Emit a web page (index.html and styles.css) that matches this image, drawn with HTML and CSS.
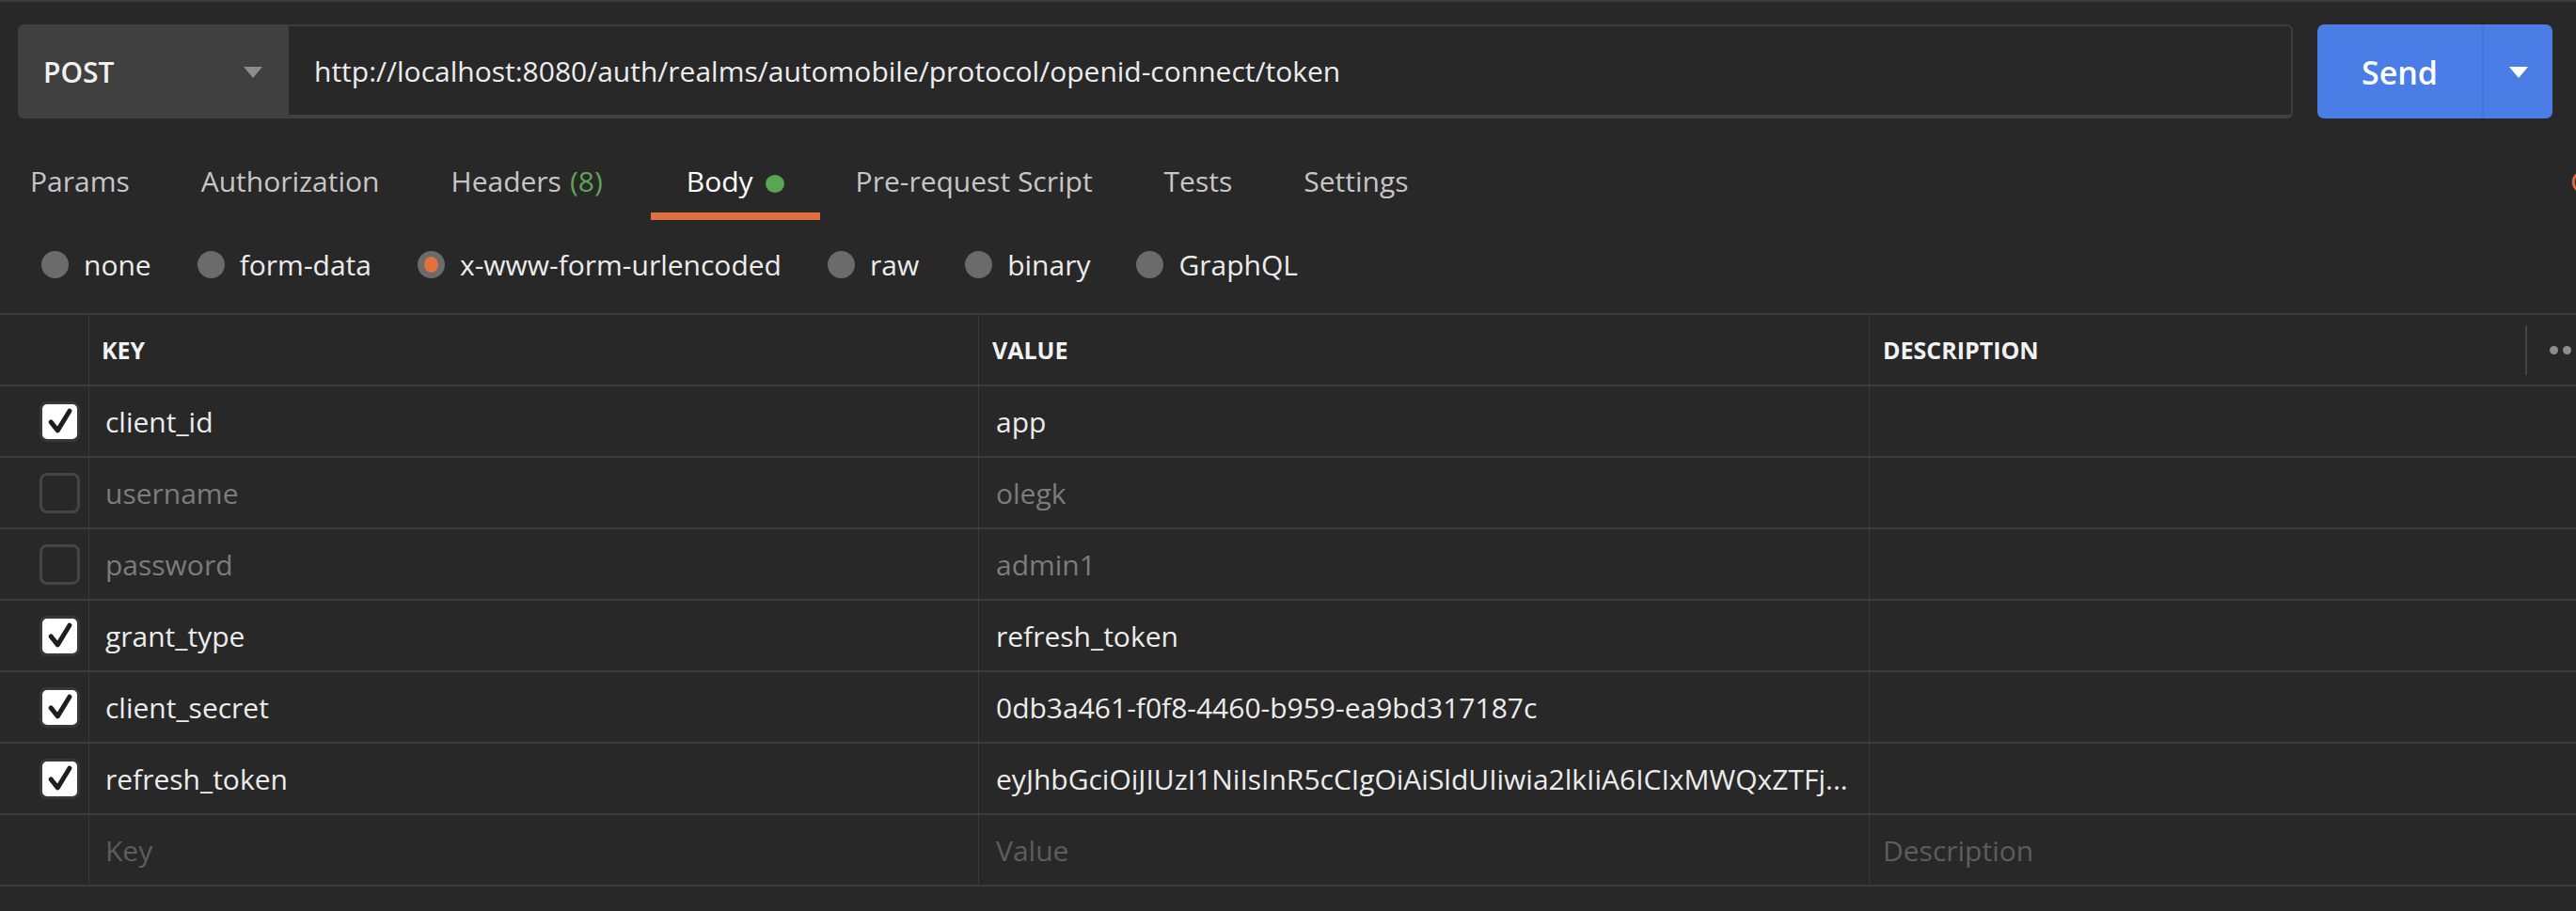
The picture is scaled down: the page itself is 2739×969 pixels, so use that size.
FILE: index.html
```html
<!DOCTYPE html>
<html lang="en">
<head>
<meta charset="utf-8">
<title>Postman request</title>
<link rel="stylesheet" href="styles.css">
</head>
<body>
<div class="app">
  <div class="request-bar">
    <div class="method">
      <span class="method-name">POST</span>
      <span class="caret"></span>
    </div>
    <div class="url">http://localhost:8080/auth/realms/automobile/protocol/openid-connect/token</div>
    <div class="send">
      <span class="send-label">Send</span>
      <span class="send-drop"><span class="caret white"></span></span>
    </div>
  </div>

  <div class="tabs-row">
    <div class="tabs">
      <div class="tab">Params</div>
      <div class="tab">Authorization</div>
      <div class="tab headers">Headers <span class="count">(8)</span></div>
      <div class="tab active">Body <span class="dot"></span></div>
      <div class="tab">Pre-request Script</div>
      <div class="tab">Tests</div>
      <div class="tab">Settings</div>
    </div>
    <div class="spacer"></div>
    <div class="side-links"><span class="cookies">Cookies</span></div>
  </div>

  <div class="body-types">
    <label class="radio"><span class="circle"></span>none</label>
    <label class="radio"><span class="circle"></span>form-data</label>
    <label class="radio selected"><span class="circle"><span class="inner"></span></span>x-www-form-urlencoded</label>
    <label class="radio"><span class="circle"></span>raw</label>
    <label class="radio"><span class="circle"></span>binary</label>
    <label class="radio"><span class="circle"></span>GraphQL</label>
  </div>

  <div class="table">
    <div class="row head">
      <div class="cell check"></div>
      <div class="cell key">KEY</div>
      <div class="cell value">VALUE</div>
      <div class="cell desc">DESCRIPTION<span class="head-tools"><span class="vbar"></span><span class="dots"><i></i><i></i><i></i></span></span></div>
    </div>
    <div class="row">
      <div class="cell check"><span class="box on"><svg viewBox="0 0 40 40"><path d="M9 21 L17 31 L31 8"/></svg></span></div>
      <div class="cell key">client_id</div>
      <div class="cell value">app</div>
      <div class="cell desc"></div>
    </div>
    <div class="row off">
      <div class="cell check"><span class="box"></span></div>
      <div class="cell key">username</div>
      <div class="cell value">olegk</div>
      <div class="cell desc"></div>
    </div>
    <div class="row off">
      <div class="cell check"><span class="box"></span></div>
      <div class="cell key">password</div>
      <div class="cell value">admin1</div>
      <div class="cell desc"></div>
    </div>
    <div class="row">
      <div class="cell check"><span class="box on"><svg viewBox="0 0 40 40"><path d="M9 21 L17 31 L31 8"/></svg></span></div>
      <div class="cell key">grant_type</div>
      <div class="cell value">refresh_token</div>
      <div class="cell desc"></div>
    </div>
    <div class="row">
      <div class="cell check"><span class="box on"><svg viewBox="0 0 40 40"><path d="M9 21 L17 31 L31 8"/></svg></span></div>
      <div class="cell key">client_secret</div>
      <div class="cell value">0db3a461-f0f8-4460-b959-ea9bd317187c</div>
      <div class="cell desc"></div>
    </div>
    <div class="row">
      <div class="cell check"><span class="box on"><svg viewBox="0 0 40 40"><path d="M9 21 L17 31 L31 8"/></svg></span></div>
      <div class="cell key">refresh_token</div>
      <div class="cell value">eyJhbGciOiJIUzI1NiIsInR5cCIgOiAiSldUIiwia2lkIiA6ICIxMWQxZTFj...</div>
      <div class="cell desc"></div>
    </div>
    <div class="row placeholder">
      <div class="cell check"></div>
      <div class="cell key">Key</div>
      <div class="cell value">Value</div>
      <div class="cell desc">Description</div>
    </div>
  </div>
</div>
</body>
</html>
```

FILE: styles.css
```css
html, body {
  margin: 0;
  padding: 0;
  background: #282828;
}
body {
  font-family: "Open Sans", "Noto Sans", sans-serif;
  color: #ececec;
  overflow: hidden;
  width: 2739px;
  height: 969px;
}
.app {
  border-top: 2px solid #3a3a3a;
  height: 967px;
}

/* request bar */
.request-bar {
  display: flex;
  padding: 24px 25px 0 19px;
  height: 100px;
}
.method {
  width: 288px;
  background: #404040;
  border-radius: 6px 0 0 6px;
  display: flex;
  align-items: center;
  padding: 0 28px 0 27px;
  box-sizing: border-box;
}
.method-name {
  font-size: 30px;
  font-weight: 600;
  color: #f2f2f2;
  flex: 1;
}
.caret {
  width: 0;
  height: 0;
  border-left: 10px solid transparent;
  border-right: 10px solid transparent;
  border-top: 12px solid #8c8c8c;
  margin-top: 2px;
}
.caret.white { border-top-color: #ffffff; }
.url {
  flex: 1;
  background: #282828;
  border: 2px solid #3c3c3c;
  border-left: none;
  border-bottom: 4px solid #404040;
  border-radius: 0 6px 6px 0;
  display: flex;
  align-items: center;
  padding-left: 27px;
  font-size: 30px;
  color: #ededed;
  box-sizing: border-box;
}
.send {
  margin-left: 26px;
  width: 250px;
  background: #4a7de5;
  border-radius: 7px;
  display: flex;
  align-items: stretch;
}
.send-label {
  width: 175px;
  display: flex;
  align-items: center;
  justify-content: center;
  font-size: 34px;
  font-weight: 600;
  color: #ffffff;
  border-right: 2px solid #4373d6;
  padding-top: 2px;
}
.send-drop {
  flex: 1;
  display: flex;
  align-items: center;
  justify-content: center;
}

/* tabs */
.tabs-row {
  display: flex;
  margin-top: 46px;
  height: 62px;
}
.tabs {
  display: flex;
}
.tab {
  padding: 0 38px;
  font-size: 30px;
  line-height: 41px;
  height: 54px;
  color: #c6c6c6;
  display: flex;
  align-items: flex-start;
  white-space: nowrap;
}
.tab:first-child { padding-left: 32px; }
.tab.headers { padding-right: 51px; }
.tab .count {
  color: #5fa35a;
  margin-left: 9px;
}
.tab.active {
  color: #ffffff;
  border-bottom: 8px solid #e07040;
}
.tab .dot {
  width: 20px;
  height: 19px;
  border-radius: 50%;
  background: #58a552;
  margin: 14px 0 0 13px;
}
.spacer { flex: 1; }
.side-links {
  width: 6px;
  overflow: hidden;
  font-size: 30px;
  line-height: 41px;
  color: #e07040;
}

/* body types */
.body-types {
  display: flex;
  align-items: center;
  height: 72px;
  padding-left: 44px;
  margin-top: 11px;
}
.radio {
  display: flex;
  align-items: center;
  font-size: 30px;
  color: #ececec;
  margin-right: 49px;
  white-space: nowrap;
}
.circle {
  width: 29px;
  height: 29px;
  border-radius: 50%;
  background: #6b6b6b;
  margin-right: 16px;
  display: flex;
  align-items: center;
  justify-content: center;
}
.circle .inner {
  width: 15px;
  height: 17px;
  border-radius: 50%;
  background: #e2713d;
}

/* table */
.table {
  margin-top: 16px;
  border-top: 2px solid #3c3c3c;
}
.row {
  display: flex;
  height: 74px;
  border-bottom: 2px solid #3c3c3c;
  font-size: 30px;
}
.cell {
  display: flex;
  align-items: center;
  box-sizing: border-box;
  white-space: nowrap;
  overflow: hidden;
}
.cell.check {
  width: 95px;
  justify-content: center;
  padding: 0 4px 0 37px;
  border-right: 1px solid #3a3a3a;
}
.cell.key {
  width: 946px;
  padding-left: 17px;
  border-right: 1px solid #3a3a3a;
}
.cell.value {
  width: 947px;
  padding-left: 18px;
  border-right: 1px solid #3a3a3a;
}
.cell.desc {
  flex: 1;
  padding-left: 14px;
}
.row.head .cell {
  font-size: 25px;
  font-weight: 700;
  color: #f2f2f2;
}
.row.head .cell.key { padding-left: 13px; }
.row.head .cell.value { padding-left: 14px; }
.head-tools {
  margin-left: auto;
  display: flex;
  align-items: center;
}
.vbar {
  width: 2px;
  height: 53px;
  background: #454545;
  margin-right: 24px;
}
.dots {
  display: flex;
  gap: 5px;
  margin-right: -9px;
}
.dots i {
  width: 9px;
  height: 9px;
  border-radius: 50%;
  background: #8e8e8e;
}
.box {
  width: 43px;
  height: 43px;
  box-sizing: border-box;
  border: 3px solid #454545;
  border-radius: 8px;
  display: flex;
  align-items: center;
  justify-content: center;
  flex: none;
}
.box.on {
  background: #ffffff;
  border-color: #383838;
}
.box svg {
  width: 36px;
  height: 36px;
}
.box svg path {
  fill: none;
  stroke: #1e1e1e;
  stroke-width: 5.5;
  stroke-linecap: round;
  stroke-linejoin: round;
}
.row.off .cell { color: #7c7c7c; }
.row.placeholder .cell { color: #5d5d5d; }
```
